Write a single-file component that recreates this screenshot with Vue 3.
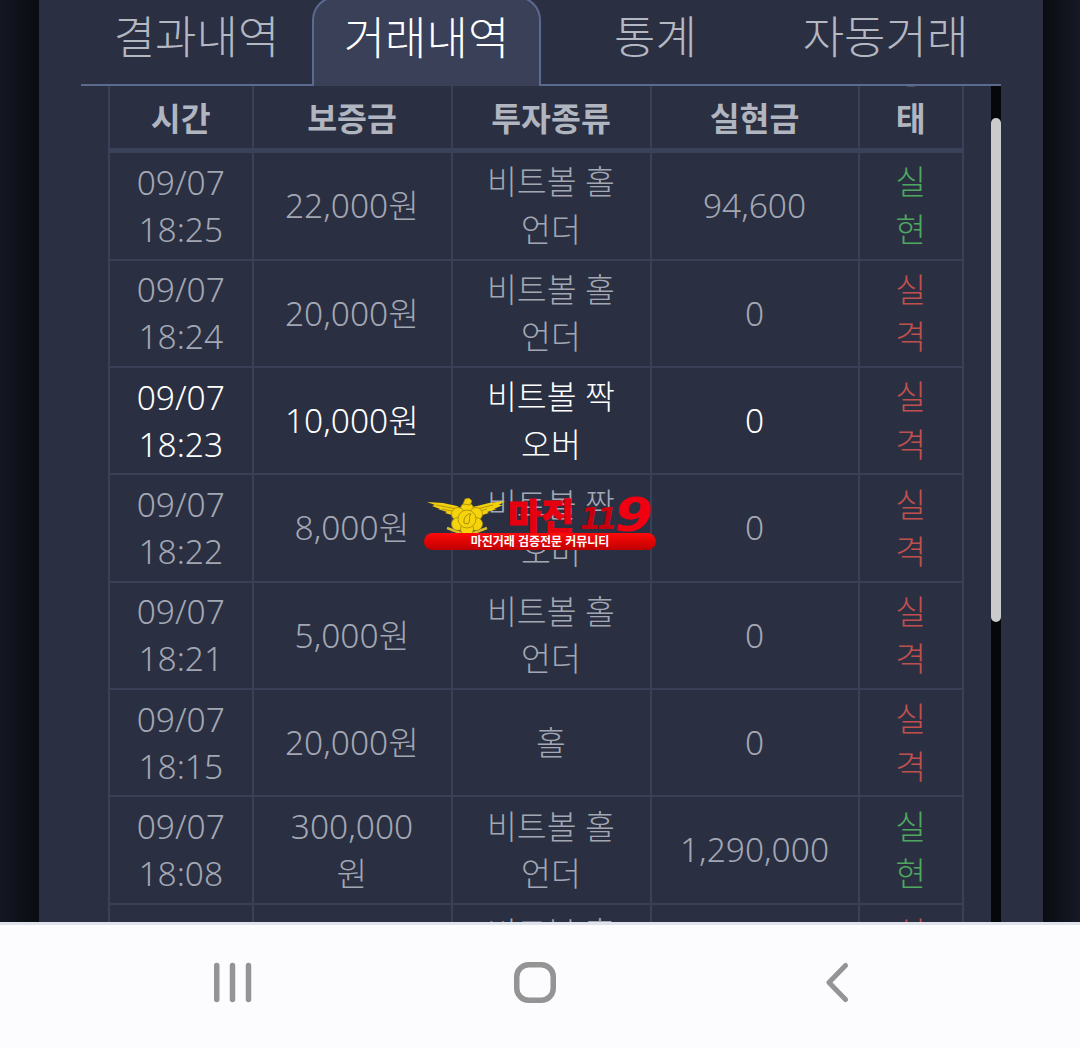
<template>
  <div class="screen">
    <div class="page">
      <div class="panel">
        <nav class="tabs">
          <div v-for="tab in tabs" :key="tab" class="tab" :class="{ active: tab === activeTab }">{{ tab }}</div>
        </nav>
        <div class="scroller">
          <div class="scroll-inner">
            <table class="history">
              <colgroup>
                <col style="width: 143.5px" />
                <col style="width: 199px" />
                <col style="width: 199px" />
                <col style="width: 208px" />
                <col style="width: 104.5px" />
              </colgroup>
              <thead>
                <tr>
                  <th>시간</th>
                  <th>보증금</th>
                  <th>투자종류</th>
                  <th>실현금</th>
                  <th>상태</th>
                </tr>
              </thead>
              <tbody>
                <tr v-for="(row, idx) in rows" :key="idx" :class="{ highlight: row.highlight }">
                  <td class="when">{{ row.date }}<br />{{ row.time }}</td>
                  <td>{{ row.stake }}</td>
                  <td class="kind">{{ row.kind }}</td>
                  <td>{{ row.payout }}</td>
                  <td :class="row.won ? 'won' : 'lost'">{{ row.won ? '실현' : '실격' }}</td>
                </tr>
              </tbody>
            </table>
          </div>
          <div class="scrollbar"><div class="thumb"></div></div>
        </div>
      </div>
    </div>

    <div class="watermark">
      <div class="wm-top">
        <svg class="eagle" width="80" height="38" viewBox="0 0 80 38">
          <path d="M20 30 L36 36 M60 30 L44 36" stroke="#d9bd2a" stroke-width="2.5" fill="none" />
          <path fill="#f2d00e" d="M0 4 L16 5 L30 8 L35 11 L50 8 L62 5 L78 3 L72 7 L76 7 L67 11 L70 11 L60 14 L62 15 L52 18 L28 18 L18 15 L20 14 L11 11 L13 11 L5 8 L8 7 Z" />
          <path fill="none" stroke="#a58a08" stroke-width="0.8" d="M9 7 L30 11 M15 11 L30 14 M66 7 L50 11 M60 11 L50 14" />
          <g fill="#f5d40c" stroke="#a58a08" stroke-width="0.8">
            <circle cx="40" cy="11" r="6.5" />
            <circle cx="31" cy="16" r="6.5" />
            <circle cx="49" cy="16" r="6.5" />
            <circle cx="31" cy="26" r="6.5" />
            <circle cx="49" cy="26" r="6.5" />
            <circle cx="40" cy="31" r="6.5" />
            <circle cx="40" cy="21" r="9" />
          </g>
          <path fill="#f2d00e" stroke="#a58a08" stroke-width="0.8" d="M36 6 L38 1 L42 0 L45 3 L43 7 Z" />
          <path fill="none" stroke="#a58a08" stroke-width="1" d="M37 25 C36 19 41 15 44 16 C41 19 44 22 41 26 Z" />
        </svg>
        <span class="wm-name">마진</span>
        <span class="wm-num"><span class="wm-small">11</span><span class="wm-big">9</span></span>
      </div>
      <div class="wm-pill">마진거래 검증전문 커뮤니티</div>
    </div>

    <footer class="navbar">
      <svg width="40" height="42" viewBox="0 0 40 42" fill="none" stroke="#949494" stroke-width="5.5" stroke-linecap="round">
        <path d="M3.75 4.5 V38.5 M19.5 4.5 V38.5 M35.5 4.5 V38.5" />
      </svg>
      <svg width="44" height="42" viewBox="0 0 44 42" fill="none" stroke="#949494" stroke-width="5.5">
        <rect x="3.75" y="3.75" width="36.5" height="35.5" rx="12" />
      </svg>
      <svg class="nav-back" width="28" height="42" viewBox="0 0 28 42" fill="none" stroke="#949494" stroke-width="5" stroke-linecap="round" stroke-linejoin="round">
        <path d="M20.5 4.5 L4 21.5 L20.5 38.5" />
      </svg>
    </footer>
  </div>
</template>

<script setup>
const tabs = ['결과내역', '거래내역', '통계', '자동거래']
const activeTab = '거래내역'

const rows = [
  { date: '09/07', time: '18:25', stake: '22,000원', kind: '비트볼 홀 언더', payout: '94,600', won: true },
  { date: '09/07', time: '18:24', stake: '20,000원', kind: '비트볼 홀 언더', payout: '0', won: false },
  { date: '09/07', time: '18:23', stake: '10,000원', kind: '비트볼 짝 오버', payout: '0', won: false, highlight: true },
  { date: '09/07', time: '18:22', stake: '8,000원', kind: '비트볼 짝 오버', payout: '0', won: false },
  { date: '09/07', time: '18:21', stake: '5,000원', kind: '비트볼 홀 언더', payout: '0', won: false },
  { date: '09/07', time: '18:15', stake: '20,000원', kind: '홀', payout: '0', won: false },
  { date: '09/07', time: '18:08', stake: '300,000원', kind: '비트볼 홀 언더', payout: '1,290,000', won: true },
  { date: '09/07', time: '18:02', stake: '100,000원', kind: '비트볼 홀 언더', payout: '0', won: false }
]
</script>

<style>
html,
body {
  margin: 0;
  background: #0d0f18;
}
</style>

<style scoped>
.screen {
  position: relative;
  width: 1080px;
  height: 1048px;
  display: flex;
  flex-direction: column;
  overflow: hidden;
  font-family: "Noto Sans", "Noto Sans CJK KR", sans-serif;
}

.page {
  height: 922px;
  flex: none;
  padding: 0 37px 0 39px;
  overflow: hidden;
  background: linear-gradient(90deg, #141722, #0a0c12 39px, #0a0c12 1043px, #161926);
}

.panel {
  height: 100%;
  background: #2a2f42;
  display: flex;
  flex-direction: column;
  padding: 0 42px;
}

.tabs {
  flex: none;
  height: 86px;
  display: flex;
  box-sizing: border-box;
  border-bottom: 2px solid #5c6a90;
}

.tab {
  height: 86px;
  box-sizing: border-box;
  display: flex;
  align-items: center;
  justify-content: center;
  padding-bottom: 18px;
  font-size: 45px;
  font-weight: 300;
  color: #b4b8c2;
  flex: none;
}

.tab:nth-child(1) { width: 231px; }
.tab:nth-child(2) { width: 229px; }
.tab:nth-child(3) { width: 229px; }
.tab:nth-child(4) { width: 231px; }

.tab.active {
  height: 90px;
  margin-top: -4px;
  padding-bottom: 14px;
  color: #fff;
  background: #394058;
  border: 2px solid #5c6a90;
  border-bottom: 0;
  border-radius: 24px 24px 0 0;
}

.scroller {
  flex: 1;
  min-height: 0;
  display: flex;
  overflow: hidden;
}

.scroll-inner {
  flex: 1;
  min-width: 0;
  overflow: hidden;
  padding-left: 27px;
}

.history {
  margin-top: -44px;
  width: 854px;
  table-layout: fixed;
  border-collapse: collapse;
  font-size: 33.5px;
  line-height: 47.5px;
  color: #a3a7b3;
}

th,
td {
  border: 2px solid #3a4056;
  padding: 5.2px 24px;
  text-align: center;
  font-weight: 300;
}

td.kind {
  font-size: 32.5px;
}

td.when {
  line-height: 47px;
}

th {
  font-weight: 700;
  color: #b0b5c0;
  font-size: 32.5px;
  vertical-align: bottom;
  border-top: 0;
  padding-bottom: 6px;
  border-bottom: 5px solid #3a4259;
}

.highlight td {
  color: #fff;
}

td.won,
.highlight td.won {
  color: #4fa860;
}

td.lost,
.highlight td.lost {
  color: #c0504e;
}

.scrollbar {
  flex: none;
  width: 10px;
  background: #06070b;
  position: relative;
}

.thumb {
  position: absolute;
  top: 32px;
  left: 0;
  right: 0;
  height: 504px;
  background: #cbcbcb;
  border-radius: 5px;
}

.watermark {
  position: absolute;
  left: 424px;
  top: 497px;
  width: 232px;
}

.wm-top {
  position: relative;
  height: 36px;
}

.eagle {
  position: absolute;
  left: 3px;
  top: 1px;
}

.wm-name {
  position: absolute;
  left: 84px;
  top: 1px;
  font-size: 36px;
  line-height: 38px;
  font-weight: 900;
  color: #e6000f;
  -webkit-text-stroke: 1px #e6000f;
  white-space: nowrap;
}

.wm-num {
  position: absolute;
  left: 156px;
  top: 0;
  display: flex;
  align-items: flex-end;
  height: 38px;
  font-family: "DejaVu Sans", sans-serif;
  font-weight: 700;
  font-style: italic;
  white-space: nowrap;
}

.wm-small {
  font-size: 30px;
  line-height: 32px;
  letter-spacing: -4px;
  color: #c8000e;
}

.wm-big {
  display: inline-block;
  font-size: 46px;
  line-height: 40px;
  margin-left: 4px;
  color: #f00010;
  transform: scaleX(1.2);
}

.wm-pill {
  position: relative;
  height: 17px;
  border-radius: 8.5px;
  background: linear-gradient(180deg, #ff0a0a, #bf0000);
  color: #fff;
  font-size: 12px;
  font-weight: 700;
  line-height: 17px;
  text-align: center;
}

.navbar {
  flex: 1;
  box-sizing: border-box;
  border-top: 3px solid #dfe3ec;
  background: #fcfcfe;
  display: flex;
  align-items: flex-start;
  padding: 36px 0 0 213px;
  gap: 260px;
}

.nav-back {
  margin-left: 8px;
}
</style>
